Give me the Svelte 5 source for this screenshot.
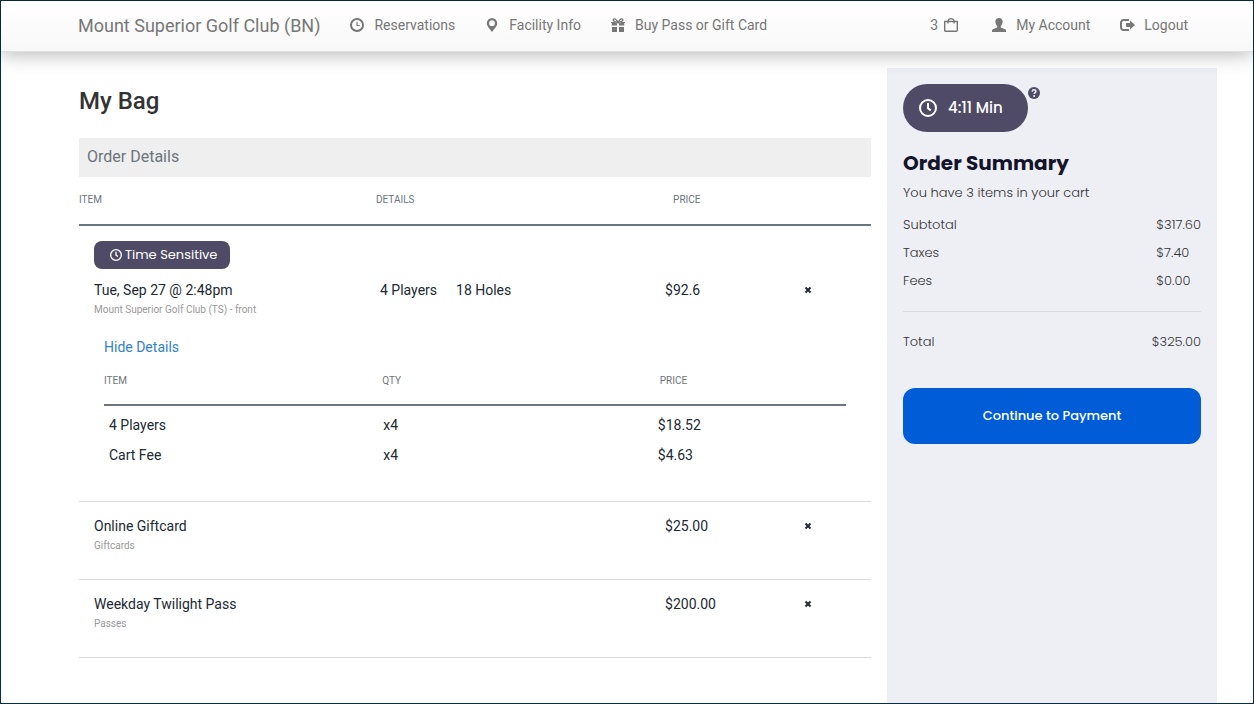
<script lang="ts">
  let showDetails = $state(true);

  let items = $state([
    {
      id: 1,
      name: 'Tue, Sep 27 @ 2:48pm',
      category: 'Mount Superior Golf Club (TS) - front',
      details: ['4 Players', '18 Holes'],
      price: '$92.6',
      timeSensitive: true,
      lines: [
        { name: '4 Players', qty: 'x4', price: '$18.52' },
        { name: 'Cart Fee', qty: 'x4', price: '$4.63' }
      ]
    },
    { id: 2, name: 'Online Giftcard', category: 'Giftcards', details: [], price: '$25.00', timeSensitive: false, lines: [] },
    { id: 3, name: 'Weekday Twilight Pass', category: 'Passes', details: [], price: '$200.00', timeSensitive: false, lines: [] }
  ]);

  const charges = [
    { label: 'Subtotal', amount: '$317.60' },
    { label: 'Taxes', amount: '$7.40' },
    { label: 'Fees', amount: '$0.00' }
  ];

  function removeItem(id: number) {
    items = items.filter((item) => item.id !== id);
  }
</script>

{#snippet clock()}
  <svg class="clock" viewBox="0 0 18 18" aria-hidden="true">
    <circle cx="9" cy="9" r="8" fill="none" stroke="currentColor" stroke-width="2" />
    <path d="M9 4v5.2l2.8 2.2" fill="none" stroke="currentColor" stroke-width="2" />
  </svg>
{/snippet}

<div class="page">
  <header class="header">
    <a href="/" class="brand">Mount Superior Golf Club (BN)</a>
    <nav class="nav" aria-label="Main">
      <a href="/reservations" class="nav-link">
        <svg class="icon" viewBox="0 0 14 14" aria-hidden="true">
          <circle cx="7" cy="7" r="6" fill="none" stroke="currentColor" stroke-width="2" />
          <path d="M7 3.8V7.5H9.8" fill="none" stroke="currentColor" stroke-width="1.1" />
        </svg>
        Reservations
      </a>
      <a href="/facility" class="nav-link">
        <svg class="icon" viewBox="0 0 14 14" aria-hidden="true">
          <path fill="currentColor" fill-rule="evenodd" d="M7 0a5.200 5.200 0 0 1 5.200 5.200C12.200 8.300 9 11 7 14 5 11 1.800 8.300 1.800 5.200A5.200 5.200 0 0 1 7 0zM7 2.300a2.900 2.900 0 1 0 0 5.800 2.900 2.900 0 0 0 0-5.800z" />
        </svg>
        Facility Info
      </a>
      <a href="/passes" class="nav-link">
        <svg class="icon" viewBox="0 0 14 14" aria-hidden="true">
          <path fill="currentColor" d="M0 4h3.500L6 5.500V7.500H.8V5H0zM14 4h-3.500L8 5.500V7.500h5.200V5H14zM1 9h5v5H1zM8 9h5v5H8z" />
          <path d="M7 4.500C5.500 1.500 4 .4 2.600 1 1.300 2.200 2.800 3.700 7 4.500zM7 4.500C8.500 1.500 10 .4 11.400 1 12.700 2.200 11.200 3.700 7 4.500z" fill="none" stroke="currentColor" stroke-width="1.300" />
        </svg>
        Buy Pass or Gift Card
      </a>
    </nav>
    <nav class="nav account" aria-label="Account">
      <a href="/bag" class="nav-link bag" aria-label="3 items in bag">
        3
        <svg class="icon" viewBox="0 0 14 14" aria-hidden="true">
          <path d="M.7 3.500h12.600v8.800a1 1 0 0 1-1 1H1.700a1 1 0 0 1-1-1zM4 5.500V3.500a3 2.900 0 0 1 6 0V5.500" fill="none" stroke="currentColor" stroke-width="1.400" />
        </svg>
      </a>
      <a href="/account" class="nav-link">
        <svg class="icon" viewBox="0 0 14 14" aria-hidden="true">
          <path fill="currentColor" d="M7 0c2.300 0 3.600 1.400 3.600 3.500 0 1.700-.6 3.400-1.800 4.400v1.600c1.500.9 4.600 1.300 5.200 2.800V14H0v-1.700c.6-1.500 3.700-1.900 5.200-2.800V7.900C4 6.900 3.400 5.200 3.400 3.500 3.400 1.400 4.700 0 7 0z" />
        </svg>
        My Account
      </a>
      <a href="/logout" class="nav-link">
        <svg class="icon" viewBox="0 0 14 14" aria-hidden="true">
          <path d="M9 2H3.500A2.500 2.500 0 0 0 1 4.500v5A2.500 2.500 0 0 0 3.500 12H9" fill="none" stroke="currentColor" stroke-width="2" />
          <path fill="currentColor" d="M6 5h4V2.500L15 7l-5 4.500V9H6z" />
        </svg>
        Logout
      </a>
    </nav>
  </header>

  <div class="content">
    <main class="cart">
      <h1>My Bag</h1>
      <h2 class="section-title">Order Details</h2>

      <table class="order">
        <colgroup>
          <col class="col-item" />
          <col class="col-details" />
          <col class="col-price" />
          <col />
        </colgroup>
        <thead>
          <tr>
            <th scope="col">ITEM</th>
            <th scope="col">DETAILS</th>
            <th scope="col" class="price-head">PRICE</th>
            <td></td>
          </tr>
        </thead>
        {#each items as item (item.id)}
          <tbody class="item" class:timed={item.timeSensitive}>
            {#if item.timeSensitive}
              <tr>
                <td colspan="4" class="badge-cell">
                  <span class="badge">{@render clock()}Time Sensitive</span>
                </td>
              </tr>
            {/if}
            <tr class="item-row">
              <td class="item-name">
                {item.name}
                <span class="category">{item.category}</span>
              </td>
              <td class="item-details">
                {#each item.details as detail}
                  <span class="detail">{detail}</span>
                {/each}
              </td>
              <td>{item.price}</td>
              <td class="remove-cell">
                <button class="remove" aria-label="Remove {item.name}" onclick={() => removeItem(item.id)}>
                  <svg viewBox="0 0 8 8" aria-hidden="true">
                    <path d="M1.500 1.500l5 5M6.500 1.500l-5 5" stroke="currentColor" stroke-width="2" />
                  </svg>
                </button>
              </td>
            </tr>
            {#if item.lines.length}
              <tr>
                <td colspan="4" class="lines-cell">
                  <button class="toggle" aria-expanded={showDetails} onclick={() => (showDetails = !showDetails)}>
                    {showDetails ? 'Hide Details' : 'Show Details'}
                  </button>
                  {#if showDetails}
                    <table class="lines">
                      <colgroup>
                        <col class="col-item" />
                        <col class="col-qty" />
                        <col />
                      </colgroup>
                      <thead>
                        <tr>
                          <th scope="col">ITEM</th>
                          <th scope="col">QTY</th>
                          <th scope="col" class="line-price">PRICE</th>
                        </tr>
                      </thead>
                      <tbody>
                        {#each item.lines as line}
                          <tr>
                            <td class="line-name">{line.name}</td>
                            <td>{line.qty}</td>
                            <td>{line.price}</td>
                          </tr>
                        {/each}
                      </tbody>
                    </table>
                  {/if}
                </td>
              </tr>
            {/if}
          </tbody>
        {/each}
      </table>
    </main>

    <aside class="summary">
      <div class="timer-row">
        <div class="timer">{@render clock()}4:11 Min</div>
        <button class="help" aria-label="About the timer">
          <svg viewBox="0 0 12 12" aria-hidden="true">
            <circle cx="6" cy="6" r="6" fill="currentColor" />
            <path d="M4.100 4.600C4.300 3.300 5 2.800 6 2.800c1.100 0 1.900.6 1.900 1.600C7.900 5.700 6.200 5.600 6.200 7.100" fill="none" stroke="#eeeff5" stroke-width="1.500" />
            <circle cx="6.100" cy="9" r="1" fill="#eeeff5" />
          </svg>
        </button>
      </div>
      <h2>Order Summary</h2>
      <p>You have {items.length} items in your cart</p>
      <dl class="charges">
        {#each charges as charge}
          <dt>{charge.label}</dt>
          <dd>{charge.amount}</dd>
        {/each}
      </dl>
      <dl class="charges total">
        <dt>Total</dt>
        <dd>$325.00</dd>
      </dl>
      <button class="pay">Continue to Payment</button>
    </aside>
  </div>
</div>

<style>
  :global(body) {
    margin: 0;
    background: #fff;
  }

  .page {
    display: flex;
    flex-direction: column;
    box-sizing: border-box;
    min-height: 100vh;
    border: 1px solid #062f45;
    font-family: Roboto, "Liberation Sans", sans-serif;
    font-size: 14px;
    line-height: 20px;
    color: #212932;
  }

  button {
    border: none;
    padding: 0;
    background: none;
    font: inherit;
    cursor: pointer;
  }

  svg {
    display: block;
    flex: none;
    overflow: visible;
  }

  .header {
    position: relative;
    z-index: 1;
    display: flex;
    align-items: center;
    height: 50px;
    padding: 0 65px 0 77px;
    background: linear-gradient(#fff, #f8f8f8);
    border-bottom: 1px solid #e0e0e0;
    box-shadow: 0 2px 20px rgba(0, 0, 0, 0.3);
  }

  .brand {
    margin-right: 30px;
    font-size: 18px;
    color: #777;
    text-decoration: none;
  }

  .nav {
    display: flex;
    gap: 30px;
  }

  .account {
    margin-left: auto;
  }

  .nav-link {
    display: flex;
    align-items: center;
    gap: 10px;
    padding-bottom: 2px;
    color: #777;
    text-decoration: none;
    white-space: nowrap;
  }

  .bag {
    gap: 6px;
    padding-right: 4px;
  }

  .icon {
    width: 14px;
    height: 14px;
  }

  .content {
    display: flex;
    flex: 1;
    gap: 16px;
    padding: 16px 36px 0 78px;
  }

  .cart {
    flex: 1;
    min-width: 0;
  }

  h1 {
    margin: 17px 0 21px;
    font-size: 24px;
    font-weight: 500;
    line-height: 32px;
    color: #333;
  }

  .section-title {
    margin: 0;
    padding: 7px 8px 8px;
    background: #efefef;
    font-size: 16px;
    font-weight: 400;
    line-height: 24px;
    color: #6c757d;
  }

  table {
    width: 100%;
    table-layout: fixed;
    border-collapse: separate;
    border-spacing: 0;
  }

  .col-item {
    width: 37.5%;
  }

  .col-details {
    width: 36.5%;
  }

  .col-price {
    width: 16%;
  }

  .col-qty {
    width: 37%;
  }

  th,
  td {
    padding: 0;
    text-align: left;
    vertical-align: top;
  }

  thead th,
  thead td {
    padding: 15px 0 16px;
    border-bottom: 2px solid #6c757d;
    font-size: 10px;
    font-weight: 400;
    line-height: 16px;
    color: #6c757d;
  }

  .price-head {
    padding-left: 8px;
  }

  .badge-cell {
    padding: 15px 15px 0;
  }

  .badge {
    display: flex;
    align-items: center;
    gap: 3px;
    width: fit-content;
    height: 28px;
    padding: 0 13px 0 16px;
    border-radius: 8px;
    background: #4f4b66;
    font-family: Poppins, Inter, sans-serif;
    font-size: 13px;
    color: #fff;
  }

  .badge .clock {
    width: 12px;
    height: 12px;
  }

  .item-row td {
    padding-top: 14px;
    padding-bottom: 23px;
  }

  .timed .item-row td {
    padding-top: 11px;
    padding-bottom: 0;
  }

  .item > tr:last-child > td {
    border-bottom: 1px solid #dcdcdc;
  }

  .item-name {
    padding-left: 15px;
  }

  .item-details {
    padding-left: 4px;
  }

  .category {
    display: block;
    font-size: 10px;
    color: #999;
  }

  .detail {
    margin-right: 16px;
  }

  .detail + .detail {
    margin-left: 3px;
  }

  .remove-cell {
    padding-left: 12px;
  }

  .remove {
    display: flex;
    align-items: center;
    height: 20px;
    color: #212932;
  }

  .remove svg {
    width: 8px;
    height: 8px;
  }

  .lines-cell {
    padding: 17px 25px 31px;
  }

  .toggle {
    display: block;
    color: #337fca;
  }

  .lines th {
    padding: 16px 0 15px;
  }

  .item .lines td {
    padding: 5px 0 5px 1px;
    border: none;
  }

  .item .lines tr:first-child td {
    padding-top: 9px;
  }

  .item .lines .line-name {
    padding-left: 5px;
  }

  .lines .line-price {
    padding-left: 3px;
  }

  .summary {
    box-sizing: border-box;
    flex: 0 0 330px;
    padding: 16px;
    background: #eeeff5;
    font-family: Poppins, Inter, sans-serif;
    font-size: 13px;
    font-weight: 300;
    color: #333;
  }

  .timer-row {
    display: flex;
    align-items: flex-start;
  }

  .timer {
    display: flex;
    align-items: center;
    gap: 11px;
    height: 48px;
    padding: 0 25px 0 16px;
    border-radius: 24px;
    background: #4f4b66;
    font-size: 15px;
    font-weight: 500;
    color: #fff;
  }

  .timer .clock {
    width: 18px;
    height: 18px;
  }

  .help {
    margin-top: 3px;
    color: #4f4b66;
  }

  .help svg {
    width: 12px;
    height: 12px;
  }

  .summary h2 {
    margin: 15px 0 4px;
    font-size: 20px;
    font-weight: 700;
    line-height: 32px;
    color: #14142b;
  }

  .summary p {
    margin: 0 0 8px;
  }

  .charges {
    display: grid;
    grid-template-columns: 1fr auto;
    margin: 0;
    line-height: 28px;
  }

  .charges dd {
    margin: 0;
  }

  .total {
    margin: 16px 0 32px;
    padding-top: 16px;
    border-top: 1px solid #d9dbe0;
  }

  .pay {
    width: 100%;
    height: 56px;
    border-radius: 12px;
    background: #005cd7;
    font-size: 13px;
    font-weight: 500;
    color: #fff;
  }
</style>
